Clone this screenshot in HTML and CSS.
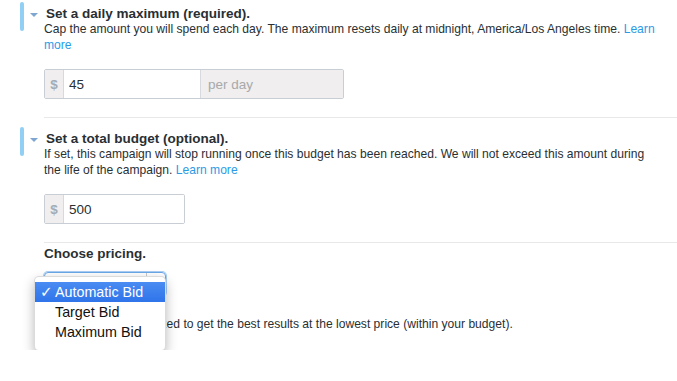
FILE: index.html
```html
<!DOCTYPE html>
<html lang="en">
<head>
  <meta charset="UTF-8" />
  <title>Budget and Pricing</title>
  <link rel="stylesheet" href="styles.css">
</head>
<body>
  <div class="page">
    <div class="section first">
      <div class="section-head">
        <span class="caret"></span>
        <h3>Set a daily maximum (required).</h3>
      </div>
      <p class="help">Cap the amount you will spend each day. The maximum resets daily at midnight, America/Los Angeles time. <a href="#">Learn more</a></p>
      <div class="input-group wide">
        <span class="addon currency">$</span>
        <input type="text" class="amount" value="45" />
        <span class="addon suffix">per day</span>
      </div>
    </div>

    <div class="section">
      <div class="section-head">
        <span class="caret"></span>
        <h3>Set a total budget (optional).</h3>
      </div>
      <p class="help">If set, this campaign will stop running once this budget has been reached. We will not exceed this amount during the life of the campaign. <a href="#">Learn more</a></p>
      <div class="input-group narrow">
        <span class="addon currency">$</span>
        <input type="text" class="amount" value="500" />
      </div>
    </div>

    <div class="section pricing">
      <h3 class="plain">Choose pricing.</h3>
      <div class="select-wrap">
        <div class="select">
          <span class="select-value">Automatic Bid</span>
          <span class="select-arrow"></span>
        </div>
        <ul class="menu">
          <li class="selected"><span class="check">✓</span>Automatic Bid</li>
          <li>Target Bid</li>
          <li>Maximum Bid</li>
        </ul>
      </div>
      <p class="help">Your bid will be optimized to get the best results at the lowest price (within your budget).</p>
    </div>
  </div>
</body>
</html>
```

FILE: styles.css
```css
body {
  margin: 0;
  font-family: 'Liberation Sans', Arial, sans-serif;
  color: #292f33;
  background: #fff;
}

.page {
  padding-left: 44px;
}

.section {
  padding: 13px 0 18px;
  border-bottom: 1px solid #e8e8e8;
}

.section.first {
  padding-top: 6px;
}

.section-head {
  position: relative;
}

/* blue marker on the left of each required/optional block */
.section-head::before {
  content: '';
  position: absolute;
  left: -24px;
  top: -4px;
  width: 4px;
  height: 29px;
  border-radius: 2px;
  background-color: #92cff5;
}

.caret {
  position: absolute;
  left: -14px;
  top: 7px;
  width: 0;
  height: 0;
  border-left: 4px solid transparent;
  border-right: 4px solid transparent;
  border-top: 4px solid #7ea6d0;
}

h3 {
  margin: 0;
  padding-left: 2px;
  font-size: 13.5px;
  line-height: 15px;
  font-weight: bold;
}

h3.plain {
  padding-left: 0;
}

.help {
  margin: 0;
  font-size: 12.1px;
  line-height: 16px;
  padding-right: 16px;
}

.help a {
  color: #2b9be6;
  text-decoration: none;
}

.input-group {
  display: flex;
  height: 30px;
  margin-top: 16px;
  box-sizing: border-box;
  border: 1px solid #c9ced4;
  border-radius: 2px;
  overflow: hidden;
}

.input-group.wide {
  width: 300px;
}

.input-group.narrow {
  width: 141px;
}

.addon {
  display: flex;
  align-items: center;
  background-color: #f0eeee;
  font-size: 13.5px;
}

.currency {
  flex: none;
  width: 18px;
  justify-content: center;
  border-right: 1px solid #d6dadf;
  color: #a2acb6;
  font-weight: bold;
}

.suffix {
  flex: 1;
  padding-left: 7px;
  border-left: 1px solid #d6dadf;
  color: #a7a9ab;
}

.amount {
  width: 131px;
  min-width: 0;
  flex: none;
  border: none;
  outline: none;
  padding: 0 0 0 5px;
  font-family: inherit;
  font-size: 13.5px;
  color: #292f33;
  background: #fff;
}

.narrow .amount {
  flex: 1;
  width: auto;
}

.section.pricing {
  padding-top: 3px;
  border-bottom: none;
}

.select-wrap {
  position: relative;
  width: 122px;
  margin: 11px 0 20px;
}

.select {
  display: flex;
  height: 24px;
  box-sizing: border-box;
  border: 1px solid #6aa6e8;
  border-radius: 4px;
  background: linear-gradient(#ffffff, #eeeeee);
  box-shadow: 0 0 0 1px #a9cdf3;
}

.select-value {
  flex: 1;
  font-size: 13px;
  line-height: 22px;
  padding-left: 8px;
}

.select-arrow {
  width: 18px;
  border-left: 1px solid #c4c8cc;
}

.menu {
  position: absolute;
  left: -10px;
  top: 4px;
  width: 132px;
  box-sizing: border-box;
  margin: 0;
  padding: 5px 0 8px;
  list-style: none;
  background: #fff;
  border: 1px solid rgba(0, 0, 0, 0.14);
  border-radius: 5px;
  box-shadow: 0 5px 12px rgba(0, 0, 0, 0.28);
}

.menu li {
  position: relative;
  height: 20px;
  padding-left: 20px;
  font-size: 14.3px;
  line-height: 20px;
  color: #111;
}

.menu li.selected {
  background: linear-gradient(#4a8cf2, #2f74ea);
  color: #fff;
}

.check {
  position: absolute;
  left: 5px;
  top: 0;
  font-size: 15px;
  font-weight: bold;
  font-family: 'DejaVu Sans', sans-serif;
}
```
